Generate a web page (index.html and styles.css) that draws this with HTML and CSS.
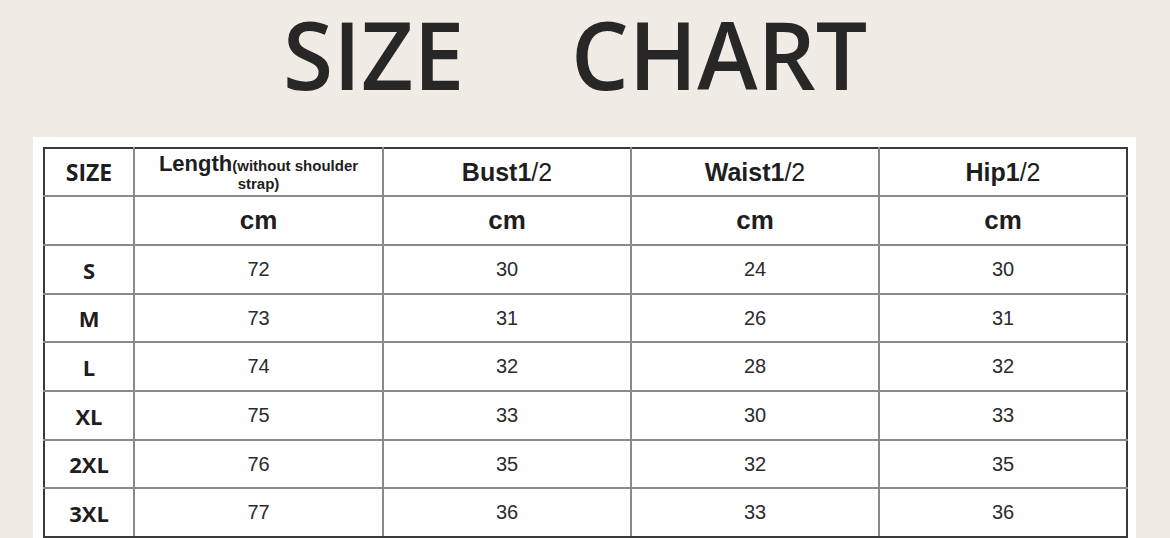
FILE: index.html
```html
<!DOCTYPE html>
<html>
<head>
<meta charset="utf-8">
<link rel="stylesheet" href="styles.css">
</head>
<body>
<div class="page">
  <h1 class="title"><span class="w1">SIZE</span><span class="w2">CHART</span></h1>
  <div class="panel">
    <table class="chart">
      <colgroup>
        <col class="c-size"><col class="c-len"><col class="c-m"><col class="c-m"><col class="c-m">
      </colgroup>
      <tr class="head short">
        <td class="lbl hsize">SIZE</td>
        <td class="len"><b class="big">Length</b><b class="small">(without shoulder<br>strap)</b></td>
        <td class="hd"><b>Bust1</b>/2</td>
        <td class="hd"><b>Waist1</b>/2</td>
        <td class="hd"><b>Hip1</b>/2</td>
      </tr>
      <tr class="unit">
        <td></td><td>cm</td><td>cm</td><td>cm</td><td>cm</td>
      </tr>
      <tr><td class="lbl">S</td><td>72</td><td>30</td><td>24</td><td>30</td></tr>
      <tr class="short"><td class="lbl">M</td><td>73</td><td>31</td><td>26</td><td>31</td></tr>
      <tr><td class="lbl">L</td><td>74</td><td>32</td><td>28</td><td>32</td></tr>
      <tr><td class="lbl">XL</td><td>75</td><td>33</td><td>30</td><td>33</td></tr>
      <tr class="short"><td class="lbl">2XL</td><td>76</td><td>35</td><td>32</td><td>35</td></tr>
      <tr><td class="lbl">3XL</td><td>77</td><td>36</td><td>33</td><td>36</td></tr>
    </table>
  </div>
</div>
</body>
</html>
```

FILE: styles.css
```css
html, body {
  margin: 0;
  padding: 0;
  background: #f0ebe4;
  overflow: hidden;
}
.page {
  width: 1170px;
  height: 538px;
  display: flex;
  flex-direction: column;
}
.title {
  flex: none;
  height: 137px;
  margin: 0;
  box-sizing: border-box;
  display: flex;
  justify-content: flex-start;
  padding: 7px 0 0 283px;
  font-family: "Open Sans", sans-serif;
  font-weight: 600;
  font-size: 94px;
  line-height: 94px;
  color: #272727;
}
.title span {
  display: inline-block;
  transform: scaleX(0.97);
  transform-origin: left center;
  white-space: nowrap;
}
.title .w1 {
  margin-right: 101px;
}
.panel {
  margin-left: 33px;
  width: 1103px;
  flex: 1;
  min-height: 0;
  overflow: hidden;
  background: #fff;
  box-sizing: border-box;
  padding: 10px 0 0 10px;
}
.chart {
  border-collapse: collapse;
  table-layout: fixed;
  width: 1085px;
  font-family: "Liberation Sans", Arial, sans-serif;
  color: #2b2b2b;
  border: 2px solid #3a3a3a;
}
.c-size { width: 90px; }
.c-len { width: 249px; }
.c-m { width: 248px; }
.chart td {
  border: 2px solid #8a8a8a;
  height: 47px;
  padding: 0;
  text-align: center;
  vertical-align: middle;
  font-size: 20px;
}
.chart .short td { height: 46px; }
.chart tr:first-child td { border-top: 2px solid #3a3a3a; }
.chart td:first-child { border-left: 2px solid #3a3a3a; }
.chart td:last-child { border-right: 2px solid #3a3a3a; }
.chart tr:last-child td { border-bottom: 2px solid #3a3a3a; }
.chart .lbl {
  font-family: "Open Sans", sans-serif;
  font-weight: 700;
  font-size: 22px;
  color: #1e1e1e;
}
.chart .hsize {
  font-size: 23px;
}
.chart .hd {
  font-size: 25px;
  color: #1e1e1e;
}
.chart .short td.len {
  height: 44px;
  padding-top: 2px;
  line-height: 17px;
  color: #1e1e1e;
}
.len .big { font-size: 22px; }
.len .small { font-size: 15px; }
.unit td {
  font-weight: 700;
  font-size: 26px;
  color: #1e1e1e;
}
```
